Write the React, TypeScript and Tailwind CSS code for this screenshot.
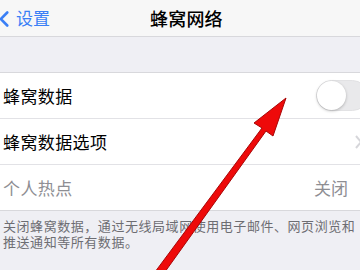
import { ChevronLeft } from "lucide-react";

const font = { fontFamily: '"Noto Sans CJK SC", "Noto Sans", sans-serif' };

const Arrow = () => (
  <svg className="absolute left-0 top-0 pointer-events-none" width="360" height="270" viewBox="0 0 360 270">
    <path
      d="M155 272 L262 128 L254 123 L286 98 L273 136 L266 131 L162 276 Z"
      fill="#ee0a0a"
      stroke="#a80606"
      strokeWidth="1"
      strokeLinejoin="round"
    />
  </svg>
);

export default function App() {
  return (
    <div className="relative w-[360px] h-[270px] overflow-hidden bg-[#efeff4]" style={font}>
      <header className="h-[37px] bg-[#f7f7f7] border-b border-[#d8d8dc] flex items-center relative">
        <ChevronLeft className="absolute -left-[9px] top-[6px] text-[#3a7ff6]" size={26} strokeWidth={2.4} />
        <span className="ml-[16px] text-[17px] text-[#3a7ff6]">设置</span>
        <h1 className="absolute left-[150px] top-[6px] text-[18px] font-medium text-black leading-[24px] tracking-[0.2px]">蜂窝网络</h1>
      </header>

      <div className="h-[36px] border-b border-[#d8d8dc]" />

      <section className="bg-white">
        <div className="h-[46px] flex items-center justify-between pl-[3px] border-b border-[#e2e2e6]">
          <span className="text-[17px] tracking-[0.4px] text-black">蜂窝数据</span>
          <div className="w-[52px] h-[31px] -mr-[8px] rounded-full bg-[#e9e9eb] border border-[#e2e2e4] relative">
            <div className="absolute left-0 top-0 w-[29px] h-[29px] rounded-full bg-white shadow-[0_1px_3px_rgba(0,0,0,0.25)]" />
          </div>
        </div>
        <div className="h-[46px] flex items-center justify-between pl-[3px] border-b border-[#e2e2e6]">
          <span className="text-[17px] tracking-[0.4px] text-black">蜂窝数据选项</span>
          <svg width="6" height="14" viewBox="0 0 6 14" className="mr-[-1px]">
            <path d="M1 1 L6 7 L1 13" fill="none" stroke="#d6d6da" strokeWidth="2" />
          </svg>
        </div>
        <div className="h-[45px] flex items-center justify-between pl-[3px] pr-[12px]">
          <span className="text-[17px] tracking-[0.4px] text-[#8e8e93]">个人热点</span>
          <span className="text-[17px] text-[#8e8e93]">关闭</span>
        </div>
      </section>

      <p className="pl-[3px] pt-[7px] text-[13px] leading-[16px] tracking-[0.55px] text-[#6d6d72] border-t border-[#d8d8dc]">
        关闭蜂窝数据，通过无线局域网使用电子邮件、网页浏览和推送通知等所有数据。
      </p>

      <Arrow />
    </div>
  );
}
